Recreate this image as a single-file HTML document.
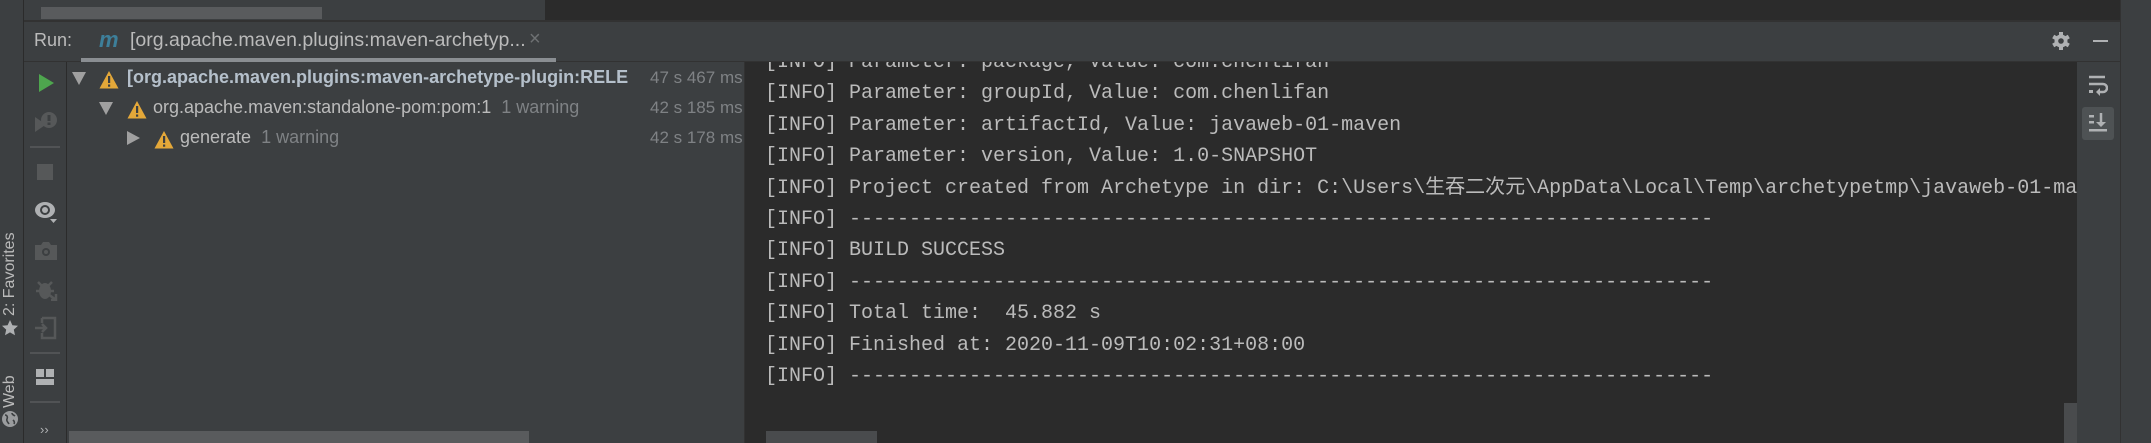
<!DOCTYPE html>
<html><head><meta charset="utf-8"><style>
*{margin:0;padding:0;box-sizing:border-box}
body{width:2151px;height:443px;overflow:hidden;background:#3c3f41;position:relative;font-family:"Liberation Sans",sans-serif}
.a{position:absolute}
.tree{font-size:18px;color:#bbbbbb;white-space:nowrap}
.gray{color:#7f8285}
.con{font-family:"Liberation Mono","Noto Sans CJK SC",monospace;font-size:20px;color:#bbbbbb;white-space:pre;line-height:31.4px}
.tri{width:0;height:0;border-left:7px solid transparent;border-right:7px solid transparent;border-top:13px solid #a0a0a0}
.trir{width:0;height:0;border-top:7px solid transparent;border-bottom:7px solid transparent;border-left:13px solid #a0a0a0}
</style></head><body>
<div class="a" style="left:0;top:0;width:545px;height:21px;background:#3c3f41"></div>
<div class="a" style="left:545px;top:0;width:1575px;height:21px;background:#2b2b2b"></div>
<div class="a" style="left:41px;top:7px;width:281px;height:12px;background:#595b5d"></div>
<div class="a" style="left:23px;top:20px;width:2097px;height:2px;background:#323232"></div>
<div class="a" style="left:2120px;top:0;width:31px;height:443px;background:#3c3f41;border-left:1px solid #323232"></div>
<div class="a" style="left:23px;top:0;width:1px;height:443px;background:#2b2b2b"></div>
<div class="a" style="left:0;top:224px;width:20px;height:92px;writing-mode:vertical-rl;transform:rotate(180deg);font-size:16px;color:#bbbbbb;line-height:20px">2: Favorites</div>
<svg class="a" style="left:0;top:318px" width="20" height="20" viewBox="0 0 20 20"><path d="M10 2l2.4 5.2 5.6.6-4.2 3.8 1.2 5.6L10 14.4 5 17.2l1.2-5.6L2 7.8l5.6-.6z" fill="#aeb0b2"/></svg>
<div class="a" style="left:0;top:366px;width:20px;height:42px;writing-mode:vertical-rl;transform:rotate(180deg);font-size:16px;color:#bbbbbb;line-height:20px">Web</div>
<svg class="a" style="left:1px;top:410px" width="18" height="18" viewBox="0 0 18 18"><circle cx="9" cy="9" r="8" fill="#9a9c9e"/><path d="M4 5c2 0 3 2 2 4s1 3 2 5M11 3c0 2 2 2 3 3M12 10c1 1 2 2 1 4" stroke="#3c3f41" stroke-width="1.6" fill="none"/></svg>
<div class="a" style="left:24px;top:22px;width:2096px;height:40px;background:#3c3f41;border-bottom:1px solid #323232"></div>
<div class="a tree" style="left:34px;top:30px;font-size:18px;color:#bbbbbb">Run:</div>
<div class="a" style="left:99px;top:27px;font-size:22px;font-weight:bold;font-style:italic;color:#3d7f9a">m</div>
<div class="a tree" style="left:130px;top:29px;font-size:19.5px">[org.apache.maven.plugins:maven-archetyp...</div>
<div class="a" style="left:529px;top:28px;font-size:20px;color:#6e7173">×</div>
<div class="a" style="left:81px;top:58px;width:475px;height:4px;background:#8a8e92"></div>
<svg class="a" style="left:2051px;top:31px" width="20" height="20" viewBox="0 0 20 20"><g fill="#afb1b3"><circle cx="10" cy="10" r="6.5"/><rect x="8" y="1" width="4" height="18"/><rect x="8" y="1" width="4" height="18" transform="rotate(60 10 10)"/><rect x="8" y="1" width="4" height="18" transform="rotate(120 10 10)"/></g><circle cx="10" cy="10" r="2.8" fill="#3c3f41"/></svg>
<div class="a" style="left:2093px;top:40px;width:15px;height:2px;background:#afb1b3"></div>
<div class="a" style="left:66px;top:62px;width:1px;height:381px;background:#2b2b2b"></div>
<svg class="a" style="left:37px;top:73px" width="18" height="20"><path d="M2 1v18l15-9z" fill="#4ea64e"/></svg>
<svg class="a" style="left:34px;top:111px" width="24" height="22"><path d="M1 6v15l11-7.5z" fill="#565859"/><circle cx="15" cy="9" r="8" fill="#565859"/><rect x="13.5" y="4" width="3" height="6" fill="#3c3f41"/><rect x="13.5" y="11.5" width="3" height="2.5" fill="#3c3f41"/></svg>
<div class="a" style="left:30px;top:146px;width:30px;height:2px;background:#515355"></div>
<div class="a" style="left:37px;top:164px;width:16px;height:16px;background:#565859"></div>
<svg class="a" style="left:34px;top:200px" width="24" height="24"><ellipse cx="11" cy="10" rx="10" ry="8" fill="#afb1b3"/><circle cx="11" cy="10" r="5" fill="#3c3f41"/><circle cx="11" cy="10" r="3" fill="#afb1b3"/><path d="M16 19h7l-3.5 4z" fill="#afb1b3"/></svg>
<svg class="a" style="left:34px;top:241px" width="24" height="20"><path d="M1 4h6l2-3h6l2 3h6v15H1z" fill="#565859"/><circle cx="12" cy="11" r="4" fill="#3c3f41"/><circle cx="12" cy="11" r="2" fill="#565859"/></svg>
<svg class="a" style="left:35px;top:279px" width="24" height="22"><ellipse cx="10" cy="12" rx="6" ry="8" fill="#565859"/><path d="M3 3l4 4M17 3l-4 4M1 12h4M15 12h4M13 15l8 6M21 15v6h-5" stroke="#565859" stroke-width="2.5" fill="none"/></svg>
<svg class="a" style="left:34px;top:316px" width="24" height="24"><path d="M8 2h13v20H8v-5M8 7V2" stroke="#565859" stroke-width="2.5" fill="none"/><path d="M1 12h11M8 8l4 4-4 4" stroke="#565859" stroke-width="2.5" fill="none"/></svg>
<div class="a" style="left:30px;top:352px;width:30px;height:2px;background:#515355"></div>
<svg class="a" style="left:36px;top:369px" width="20" height="16"><rect x="0" y="0" width="8" height="8" fill="#afb1b3"/><rect x="10" y="0" width="8" height="8" fill="#afb1b3"/><rect x="0" y="10" width="18" height="6" fill="#afb1b3"/></svg>
<div class="a" style="left:30px;top:401px;width:30px;height:2px;background:#515355"></div>
<div class="a" style="left:40px;top:422px;font-size:13px;color:#afb1b3">››</div>
<div class="a tri" style="left:72px;top:72px"></div>
<svg class="a" style="left:99px;top:70px" width="20" height="19"><path d="M10 1l9.5 17.5H.5z" fill="#e4a839"/><rect x="9" y="6" width="2.2" height="7" fill="#3c3f41"/><rect x="9" y="14.5" width="2.2" height="2.2" fill="#3c3f41"/></svg>
<div class="a tree" style="left:127px;top:67px;font-weight:bold;color:#b5c0cb">[org.apache.maven.plugins:maven-archetype-plugin:RELE</div>
<div class="a tree gray" style="left:650px;top:68px;font-size:17px">47 s 467 ms</div>
<div class="a tri" style="left:99px;top:102px"></div>
<svg class="a" style="left:127px;top:100px" width="20" height="19"><path d="M10 1l9.5 17.5H.5z" fill="#e4a839"/><rect x="9" y="6" width="2.2" height="7" fill="#3c3f41"/><rect x="9" y="14.5" width="2.2" height="2.2" fill="#3c3f41"/></svg>
<div class="a tree" style="left:153px;top:97px">org.apache.maven:standalone-pom:pom:1 <span class="gray">&nbsp;1 warning</span></div>
<div class="a tree gray" style="left:650px;top:98px;font-size:17px">42 s 185 ms</div>
<div class="a trir" style="left:127px;top:131px"></div>
<svg class="a" style="left:154px;top:130px" width="20" height="19"><path d="M10 1l9.5 17.5H.5z" fill="#e4a839"/><rect x="9" y="6" width="2.2" height="7" fill="#3c3f41"/><rect x="9" y="14.5" width="2.2" height="2.2" fill="#3c3f41"/></svg>
<div class="a tree" style="left:180px;top:127px">generate <span class="gray">&nbsp;1 warning</span></div>
<div class="a tree gray" style="left:650px;top:128px;font-size:17px">42 s 178 ms</div>
<div class="a" style="left:69px;top:431px;width:460px;height:12px;background:#595b5d"></div>
<div class="a" style="left:744px;top:62px;width:1333px;height:381px;background:#2b2b2b;border-left:1px solid #323232;overflow:hidden">
<div class="a con" style="left:20px;top:-15px">[INFO] Parameter: package, Value: com.chenlifan
[INFO] Parameter: groupId, Value: com.chenlifan
[INFO] Parameter: artifactId, Value: javaweb-01-maven
[INFO] Parameter: version, Value: 1.0-SNAPSHOT
[INFO] Project created from Archetype in dir: C:\Users\生吞二次元\AppData\Local\Temp\archetypetmp\javaweb-01-maven
[INFO] ------------------------------------------------------------------------
[INFO] BUILD SUCCESS
[INFO] ------------------------------------------------------------------------
[INFO] Total time:  45.882 s
[INFO] Finished at: 2020-11-09T10:02:31+08:00
[INFO] ------------------------------------------------------------------------</div>
<div class="a" style="left:21px;top:369px;width:111px;height:12px;background:#494b4d"></div>
<div class="a" style="left:1319px;top:341px;width:13px;height:40px;background:#494b4d"></div>
</div>
<div class="a" style="left:2077px;top:62px;width:43px;height:381px;background:#3c3f41"></div>
<svg class="a" style="left:2088px;top:75px" width="20" height="22"><path d="M1 2h16M1 9h14a4 4 0 010 8H10" stroke="#afb1b3" stroke-width="2.5" fill="none"/><path d="M12 13l-4 4 4 4z" fill="#afb1b3"/><rect x="1" y="15" width="4" height="3" fill="#afb1b3"/></svg>
<div class="a" style="left:2082px;top:107px;width:32px;height:33px;background:#4e5254;border-radius:3px"></div>
<svg class="a" style="left:2088px;top:112px" width="20" height="22"><rect x="1" y="3" width="5" height="2.5" fill="#afb1b3"/><rect x="1" y="9" width="5" height="2.5" fill="#afb1b3"/><rect x="1" y="17" width="18" height="2.5" fill="#afb1b3"/><path d="M13 1v11" stroke="#afb1b3" stroke-width="2.5"/><path d="M8 10h10l-5 5z" fill="#afb1b3"/></svg>
</body></html>
